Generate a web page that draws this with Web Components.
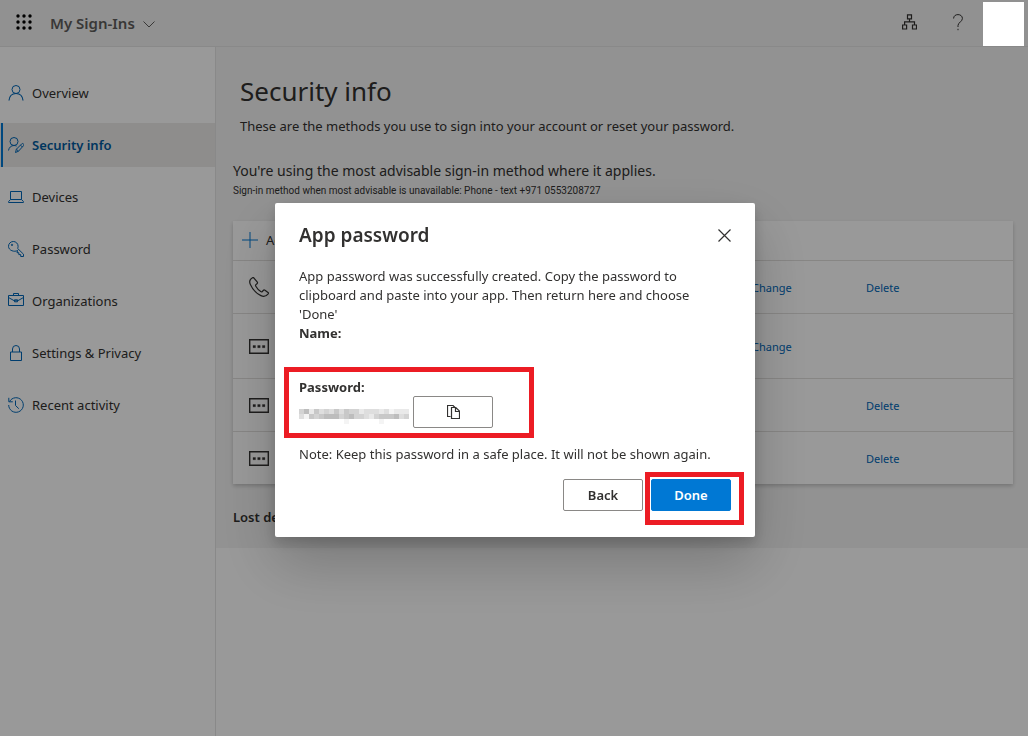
<!DOCTYPE html>
<html lang="en">
<head>
<meta charset="utf-8">
<title>My Sign-Ins</title>
<style>
html, body { margin: 0; height: 100%; }
body { font-family: "Noto Sans", "Open Sans", sans-serif; font-size: 13px; line-height: 20px; color: #323130; background: #fff; }
</style>
</head>
<body>
<sign-ins-app></sign-ins-app>
<script>
const define = (name, html, init) => {
  const tpl = document.createElement('template');
  tpl.innerHTML = html;
  customElements.define(name, class extends HTMLElement {
    constructor() {
      super();
      this.attachShadow({ mode: 'open' }).append(tpl.content.cloneNode(true));
    }
    connectedCallback() { if (init) init(this, this.shadowRoot); }
  });
};

const icons = {
  person: '<circle cx="8" cy="4.500" r="4"/><path d="M1 15.500C1.400 11.500 4 8.500 8 8.500s6.600 3 7 7" stroke-width="1.200"/>',
  personEdit: '<circle cx="6" cy="4.500" r="4"/><path d="M.5 13.500C1 10.500 3 8.500 6 8.500c1 0 1.800.2 2.500.6M7.500 15.500l.9-3.300 5.300-5.300c1.200-1.200 3 .6 1.800 1.800L10.500 14.200zM8.400 12.200l2.100 2M12.500 8.100l1.900 1.900"/>',
  laptop: '<path d="M2.500 10.500v-8h11v8M.6 13.500v-1l1.900-2h11l1.900 2v1z"/>',
  key: '<path d="M9.600 9.400C6.500 11.500.5 9.500.5 5.300a4.800 4.800 0 0 1 9.600 0c0 .8-.2 1.500-.5 2.100l5.900 5.800v2.300h-2.800v-1.900h-1.900v-1.900H9z"/><circle cx="4" cy="3.900" r=".7"/>',
  briefcase: '<path d="M.5 2.500h15v10H.5zM5.500 2.500v-2h5v2M.5 4.500l5.800 3.300h3.400l5.800-3.300M6.500 6.800h3v2h-3z"/>',
  lock: '<path d="M2.500 7h11v8.500h-11zM4.500 7V4a3.500 3.500 0 0 1 7 0v3"/>',
  history: '<path d="M1.600 4.500A7.300 7.300 0 1 1 .7 8M.8.800v4h4M7.500 3.500v5l3.300 3.200"/>',
  plus: '<path d="M8 0v16M0 8h16"/>',
  phone: '<path d="M3.500.7C1 2 0 4.500 1.400 7.600c2 4.700 5.700 8.800 10.500 11 2.700 1.300 5.200.7 7.300-1.800.4-.5.300-1-.2-1.400l-3-2.200c-.7-.5-1.300-.3-1.800.3l-.9 1c-.5.500-1 .4-1.600 0-2-1.300-3.700-3.200-4.900-5.300-.4-.7-.4-1.200.1-1.600l1.100-.9c.6-.5.700-1 .3-1.700L5 1.200C4.600.5 4.100.4 3.500.7z" stroke-width="1.200"/>',
  dots: '<path d="M.7.700h18.600v13.600H.7z" stroke-width="1.400"/><path d="M4 6.500h2.500v2.200H4zM8.700 6.500h2.500v2.200H8.700zM13.400 6.500h2.500v2.200h-2.500z" fill="currentColor" stroke-width=".3"/>',
  org: '<path d="M5.500.8h4v4h-4zM.6 11h4v4h-4zM10.500 11h4v4h-4zM7.500 4.800v3M2.600 11V7.800h9.900V11" stroke-width="1.200"/>',
  help: '<path d="M.6 4.500C.6 2 2.500.6 5 .6s4.400 1.500 4.400 3.900C9.400 8 5 8.200 5 11.500V13M5 14.800v1.400"/>',
  chevron: '<path d="M.5.5 6 6l5.500-5.500"/>',
  close: '<path d="M.5.5l12 12M12.500.5l-12 12" stroke-width="1.200"/>',
  copy: '<path d="M3.500 11.500h-3V.5H6L8.500 3M4.500 2.500h4.300l3.700 3.700v7.300h-8zM8.500 2.500v4h4" stroke-width="1.200"/>',
  waffle: [0, 6, 12].map(y => [0, 6, 12].map(x => `<circle cx="${x + 2}" cy="${y + 2}" r="1.700" fill="currentColor" stroke="none"/>`).join('')).join('')
};
const sizes = { phone: [20, 20], dots: [20, 15], org: [15, 16], help: [10, 17], chevron: [12, 7], close: [13, 13], copy: [13, 14] };

define('ui-icon', `<style>:host{display:inline-flex;flex:none}svg{display:block;fill:none;stroke:currentColor;stroke-width:1}</style><svg aria-hidden="true"></svg>`, (el, root) => {
  const name = el.getAttribute('name'), svg = root.querySelector('svg');
  if (!name) return;
  const [w, h] = sizes[name] || [16, 16];
  svg.setAttribute('width', w);
  svg.setAttribute('height', h);
  svg.setAttribute('viewBox', `0 0 ${w} ${h}`);
  svg.innerHTML = icons[name];
});

define('app-header', `<style>
:host{box-sizing:border-box;display:flex;align-items:center;height:47px;background:#f2f2f2;border-bottom:1px solid #e4e4e4;padding:0 4px 2px 16px}
button{border:0;background:none;padding:0;margin:0;font:inherit;color:inherit;display:flex;align-items:center}
.apps{color:#000;margin-right:18px}
.name{font-size:15px;font-weight:600;color:#605e5c;gap:8px;padding-top:2px}
.name ui-icon{padding-top:2px}
.tools{margin-left:auto;display:flex;align-items:center;gap:36px;color:#323130}
.avatar{position:relative;z-index:3;width:41px;height:44px;background:#fff;margin:2px 0 0 20px;align-self:flex-start}
</style>
<button class="apps" aria-label="App launcher"><ui-icon name="waffle"></ui-icon></button>
<button class="name">My Sign-Ins <ui-icon name="chevron"></ui-icon></button>
<div class="tools"><button aria-label="Organizations"><ui-icon name="org"></ui-icon></button><button aria-label="Help"><ui-icon name="help"></ui-icon></button></div>
<div class="avatar"></div>`);

define('nav-item', `<style>
:host{display:block}
a{display:flex;align-items:center;gap:8px;height:44px;padding-left:8px;color:inherit;text-decoration:none}
ui-icon{color:#0067b8}
:host([current]) a{background:#edebe9;color:#005a9e;font-weight:600;box-shadow:inset 1px 0 #edebe9,inset 3px 0 #0078d4}
</style><a href="#"><ui-icon></ui-icon><slot></slot></a>`, (el, root) => {
  const old = root.querySelector('ui-icon'), icon = document.createElement('ui-icon');
  icon.setAttribute('name', el.getAttribute('icon'));
  old.replaceWith(icon);
});

define('side-nav', `<style>
:host{display:block;background:#fff;border-right:1px solid #e4e4e4}
nav{display:flex;flex-direction:column;gap:8px;padding-top:24px}
</style><nav>
<nav-item icon="person">Overview</nav-item>
<nav-item icon="personEdit" current>Security info</nav-item>
<nav-item icon="laptop">Devices</nav-item>
<nav-item icon="key">Password</nav-item>
<nav-item icon="briefcase">Organizations</nav-item>
<nav-item icon="lock">Settings &amp; Privacy</nav-item>
<nav-item icon="history">Recent activity</nav-item>
</nav>`);

define('method-card', `<style>
:host{display:block;background:#fff;box-shadow:0 2px 4px rgba(0,0,0,.2)}
.add{display:flex;align-items:center;gap:8px;width:100%;height:40px;border:0;border-bottom:1px solid #e1dfdd;background:none;padding:0 0 2px 9px;font:inherit;color:inherit}
.add ui-icon{color:#0078d4}
table{width:100%;border-collapse:collapse;table-layout:fixed;font-size:11px}
td{padding:2px 0 0;height:50px;border-bottom:1px solid #e1dfdd}
tr.tall td{height:62px}
tr:last-child td{border-bottom:0}
td:first-child{padding:0 0 2px 16px}
ui-icon{vertical-align:middle}
a{color:#0067b8;text-decoration:none}
.c1{width:519px}.c2{width:114px}
</style>
<button class="add"><ui-icon name="plus"></ui-icon>Add</button>
<table><colgroup><col class="c1"><col class="c2"><col></colgroup><tbody>
<tr><td><ui-icon name="phone"></ui-icon></td><td><a href="#">Change</a></td><td><a href="#">Delete</a></td></tr>
<tr class="tall"><td><ui-icon name="dots"></ui-icon></td><td><a href="#">Change</a></td><td></td></tr>
<tr><td><ui-icon name="dots"></ui-icon></td><td></td><td><a href="#">Delete</a></td></tr>
<tr><td><ui-icon name="dots"></ui-icon></td><td></td><td><a href="#">Delete</a></td></tr>
</tbody></table>`);

define('security-page', `<style>
:host{display:block;background:#f4f4f4;padding:24px 15px 21px 17px}
h1{margin:0;padding-left:7px;font-size:26px;line-height:40px;font-weight:400}
p{margin:0}
.intro{padding:5px 0 0 7px;line-height:20px}
.advice{padding-top:25px;font-size:14px;line-height:20px}
.small{font-family:Roboto,sans-serif;font-size:10px;line-height:20px}
method-card{margin-top:20px}
.lost{margin-top:23px;font-weight:600}
</style>
<h1>Security info</h1>
<p class="intro">These are the methods you use to sign into your account or reset your password.</p>
<p class="advice">You're using the most advisable sign-in method where it applies.</p>
<p class="small">Sign-in method when most advisable is unavailable: Phone - text +971 0553208727</p>
<method-card></method-card>
<p class="lost">Lost device?</p>`);

define('call-out', `<style>
:host{display:block;position:relative}
:host::after{content:"";position:absolute;inset:var(--mark-inset);border:5px solid #ec1c24;pointer-events:none}
</style><slot></slot>`);

define('hidden-secret', `<style>:host{display:block}svg{display:block}</style><svg width="110" height="26" aria-label="Hidden password" role="img"></svg>`, (el, root) => {
  const rows = ['4625343535442333231222', '3154566645644324555634', '0000000001000000100000'];
  root.querySelector('svg').innerHTML = rows.map((r, y) => [...r].map((v, x) => {
    const g = 255 - v * 11;
    return `<rect x="${x * 5}" y="${10 + y * 5}" width="5" height="5" fill="rgb(${g},${g},${g})"/>`;
  }).join('')).join('');
});

define('password-dialog', `<style>
:host{position:fixed;inset:0;z-index:2;display:grid;place-items:center;padding:4px 0 0 2px;background:rgba(0,0,0,.4)}
section{box-sizing:border-box;width:480px;max-width:100%;background:#fff;border-radius:2px;padding:16px 24px 26px;box-shadow:0 26px 58px rgba(0,0,0,.22),0 5px 14px rgba(0,0,0,.18);line-height:19px}
header{display:flex;align-items:center;justify-content:space-between;height:32px}
h2{margin:0;font-size:19px;font-weight:600}
p{margin:0}
.text{margin-top:16px;padding-right:16px}
button{box-sizing:border-box;width:80px;height:32px;display:flex;align-items:center;justify-content:center;border:1px solid #8a8886;border-radius:2px;background:#fff;color:inherit;font:inherit;font-weight:600;padding:0}
.close{width:14px;border:0}
.pw{margin-top:35px;--mark-inset:-11px 197px -10px -15px}
.pw b{display:block;line-height:18px}
.row{display:flex;align-items:center;gap:4px}
.note{margin-top:17px}
footer{display:flex;justify-content:flex-end;gap:8px;margin-top:15px;--mark-inset:-7px -13px -14px -6px}
.primary{background:#0078d4;border-color:#0078d4;color:#fff}
</style>
<section role="dialog" aria-labelledby="t">
<header><h2 id="t">App password</h2><button class="close" aria-label="Close"><ui-icon name="close"></ui-icon></button></header>
<p class="text">App password was successfully created. Copy the password to clipboard and paste into your app. Then return here and choose 'Done'</p>
<p><b>Name:</b></p>
<call-out class="pw"><b>Password:</b><div class="row"><hidden-secret></hidden-secret><button aria-label="Copy"><ui-icon name="copy"></ui-icon></button></div></call-out>
<p class="note">Note: Keep this password in a safe place. It will not be shown again.</p>
<footer><button>Back</button><call-out><button class="primary">Done</button></call-out></footer>
</section>`);

define('sign-ins-app', `<style>
:host{display:flex;flex-direction:column;min-height:100%}
.body{flex:1;display:grid;grid-template-columns:216px minmax(0,1fr)}
security-page{align-self:start}
</style>
<app-header></app-header>
<div class="body"><side-nav></side-nav><security-page></security-page></div>
<password-dialog></password-dialog>`);
</script>
</body>
</html>
